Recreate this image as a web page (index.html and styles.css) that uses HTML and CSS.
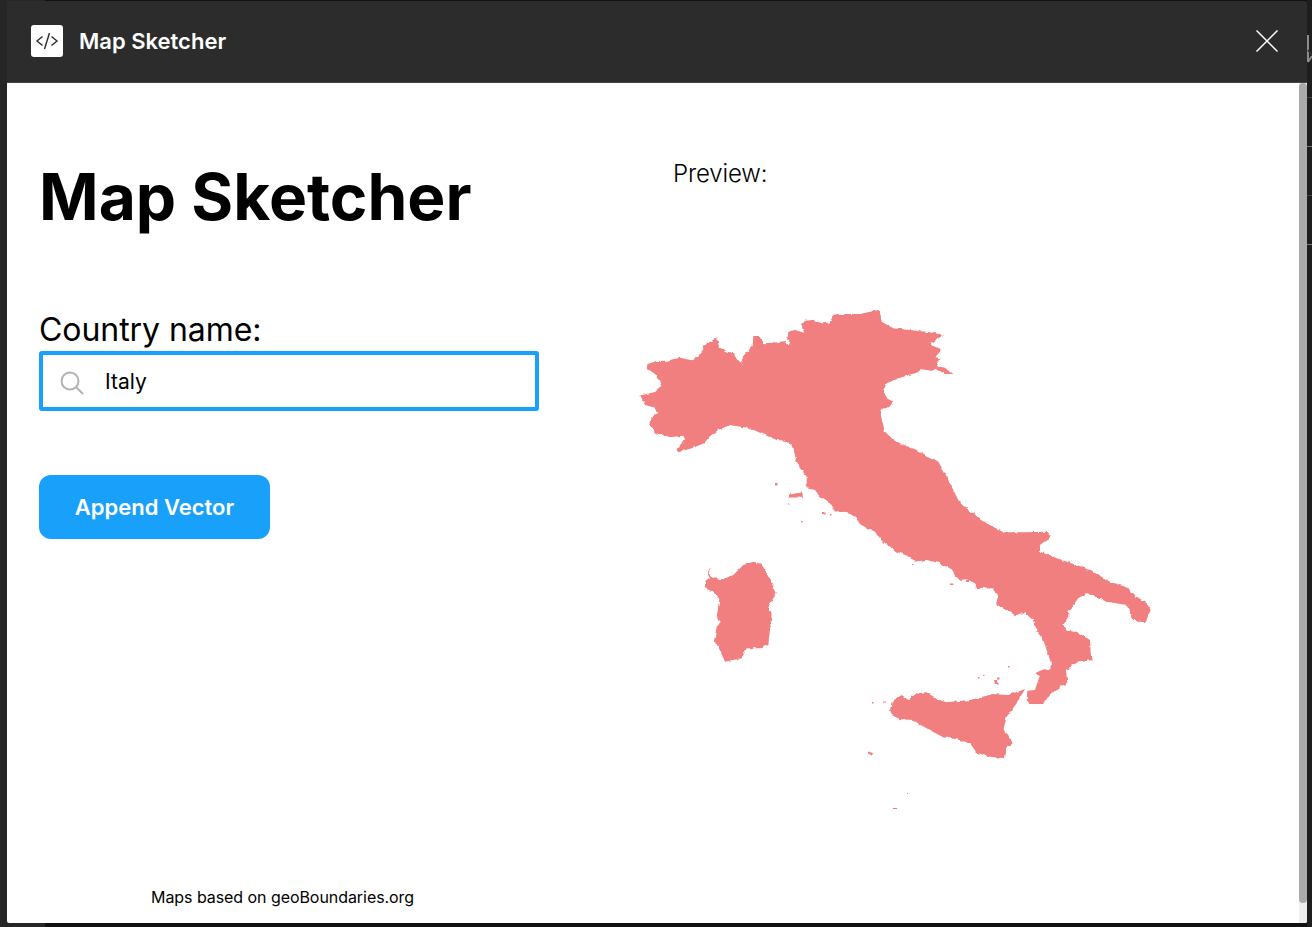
FILE: index.html
```html
<!DOCTYPE html>
<html lang="en">
<head>
<meta charset="utf-8">
<title>Map Sketcher</title>
<link rel="stylesheet" href="styles.css">
</head>
<body>
<div class="backdrop">
  <div class="window">
    <header class="titlebar">
      <div class="brand">
        <span class="logo">
          <svg width="24" height="18" viewBox="0 0 24 18" fill="none" stroke="#2c2c2c" stroke-width="1.400"><path d="M7.500 4.500 2 9 7.500 13.500M16.500 4.500 22 9 16.500 13.500M14.500 1 9.500 17"/></svg>
        </span>
        <span class="brand-name">Map Sketcher</span>
      </div>
      <svg class="close" width="22" height="22" viewBox="0 0 22 22" fill="none" stroke="#fff" stroke-width="1.500"><path d="M.5.500 21.500 21.500M21.500.500.500 21.500"/></svg>
    </header>
    <div class="content">
      <main class="page">
        <section class="form">
          <h1 class="title">Map Sketcher</h1>
          <label class="field-label" for="country">Country name:</label>
          <div class="search">
            <svg class="search-icon" width="24" height="24" viewBox="0 0 24 24" fill="none" stroke="#b3b3b3" stroke-width="2"><circle cx="10" cy="10" r="8.500"/><path d="M16 16l7 7"/></svg>
            <input id="country" class="search-input" value="Italy">
          </div>
          <button class="append">Append Vector</button>
          <p class="credit">Maps based on geoBoundaries.org</p>
        </section>
        <section class="preview">
          <p class="preview-label">Preview:</p>
          <svg class="map" width="530" height="520" viewBox="630 300 530 520" fill="#f27f7f">
            <defs>
              <filter id="rough" x="-2%" y="-2%" width="104%" height="104%">
                <feTurbulence type="fractalNoise" baseFrequency="0.22" numOctaves="2" seed="4"/>
                <feDisplacementMap in="SourceGraphic" scale="3.500" xChannelSelector="R" yChannelSelector="G"/>
              </filter>
            </defs>
            <g filter="url(#rough)">
            <path d="M639.300 395.700 646.700 394 655 392 662.300 386 659.300 380 655 374 646.700 368.300 647.700 364 656.700 361 666.700 360.700 680 357.700 691.700 360.300 698.300 356 703.300 349.300 702.700 346 711.700 340.700 717.300 337.300 718.300 345 725 351 734.300 353.300 736.700 359.300 742.700 364 741.700 358.300 746.700 351.700 752.700 346 753.300 336 759.300 336 763.300 343.300 773.300 342.700 785 341 789.300 346 791 342.700 786.700 337.700 787.300 331.700 795 330 804 332.700 801.700 325 805 320.700 813.300 320 821.700 323.300 829.300 322.700 833.300 315.700 846.700 314 860 314 878.300 310 880 313.300 881.700 321.700 893.300 328.300 916.700 330.700 930 332.300 944 335 938.300 338.300 930 344.300 941.700 350 935 357.300 940.700 358.300 936.700 366 945 367.700 952.300 374 945 374 936.700 369 931.700 370.700 921.700 369.300 916.700 372.700 901.700 377.300 886.700 383.300 883.300 390 886.700 398.300 893.300 401.700 888.300 408.300 881.700 408.300 880.700 415 885 431.700 893.300 440 901.700 444 916.700 450 926.700 456.700 938.300 461.700 945 473.300 953.300 490 960 503.300 973.300 513.300 986.700 523.300 1003.300 532.300 1026.700 532.300 1046.700 531.700 1050.700 536.700 1040 545 1040 551.700 1060 559.300 1090 570 1110 581.700 1128.300 587.700 1131.700 593.300 1146.700 603.300 1150.700 610 1145 623.300 1131.700 618.300 1126.700 605 1106.700 601.700 1095 596.700 1086.700 593.300 1078.300 598.300 1068.300 611.700 1068.300 616.700 1063.300 625 1066.700 630.700 1076.700 631.700 1090 640 1090.700 653.300 1092.700 660 1076.700 662.700 1066 670 1067.300 682.700 1056.700 689.300 1048.300 696.700 1043.300 704 1030 704 1026.700 700 1027.300 690.700 1035 690 1039.300 676.700 1035 673.300 1041.700 670 1051.700 668.300 1050 660 1043.300 640 1038.300 633.300 1032.700 620 1025 612.700 1015 615 1000 606.700 996 604 998.300 596.700 991.700 587.300 976.700 588.300 975 583.300 966.700 579.300 958.300 580 950 568.300 938.300 562.700 926.700 560 915 561.700 910 556.700 896.700 551.700 880 539.300 875 531.700 863.300 526 860 524 855 516.700 843.300 510.700 835 511.700 831.700 505 820 496.700 815 490 806.700 488.300 806.700 476.700 800 468.300 796 460 793.300 446.700 785 440.700 776.700 440 763.300 434.300 750 428.300 730 425 718.300 430 710 436 704 443.300 693.300 447.700 678.300 452.300 676.700 449 685 439.300 683.300 435.700 670 437.300 655 432.700 649.300 423.300 653.300 415 658.300 413.300 655 407.700 645 405 640 396.700Z"/>
            <path d="M705 581.700 710 578.300 706.700 572.700 711.700 567.300 708.300 573.300 713.300 578.300 723.300 579.300 733.300 575 743.300 565 753.300 561.700 761.700 564 768.300 576.700 776.700 592.700 768.300 606.700 771.700 613.300 768.300 645 761.700 648.300 746.700 648.300 741.700 658.300 725 661.700 718.300 646.700 714 641.700 716.700 626.700 720.700 621.700 716.700 616.700 719.300 600 713.300 591.700 705 588.300Z"/>
            <path d="M890 710 891.700 701.700 901.700 695 908.300 700 916.700 693.300 926.700 692.300 938.300 700 946.700 702.300 970 700 993.300 694 1008.300 695 1025 689 1016.700 703.300 1006.700 716.700 1003.300 730 1008.300 735 1012.700 743.300 1006.700 748.300 1005 758.300 990 756.700 976.700 752.700 970 743.300 956.700 739.300 943.300 737.300 923.300 726.700 913.300 720 900 719.300 891.700 715Z"/>
            <path d="M789 494.500 802 492.500 803 498 797 497.500 789 497.500Z"/>
            </g>
            <path d="M775 483h2.500v2.500h-2.500zM868 751.500 873 753 872 755.500 868 753.500ZM950 583.500h3.500v1.500h-3.500zM966 580h3v2h-3zM997 677.500h2.500v2h-2.500zM994 680h3v4h-2zM997 682l2 2-1 1-1-1zM823.500 512.500h2v2h-2zM788 503.500h1.500v1h-1.500zM801 521h1.500v1.500h-1.500zM822 512h2v2h-2zM830 514h1.500v1.500h-1.500zM978 677h1.500v1.500h-1.500zM1008 666h1.500v1.500h-1.500zM983 675h1.500v1h-1.500zM872 702h1.500v1.500h-1.500zM883 701.500h3v1h-3zM893 808h4v1h-4zM907 793h1v1h-1zM912 564h1.500v1h-1.500z"/>
          </svg>
        </section>
      </main>
      <div class="scrollbar"><div class="thumb"></div></div>
    </div>
  </div>
  <aside class="side">
    <svg class="side-glyph" width="5" height="28" viewBox="0 0 5 28" fill="none" stroke="#8c8c8c" stroke-width="2"><path d="M1 0V27M1 27 5 21"/><path d="M1 15 5 20" stroke="#333"/></svg>
    <i class="tick tick-dim"></i><i class="tick tick-light"></i><i class="tick tick-dim"></i><i class="tick tick-light"></i>
  </aside>
</div>
</body>
</html>
```
FILE: styles.css
```css
* { box-sizing: border-box; }
html, body { margin: 0; height: 100%; overflow: hidden; }
body { background: #1a1a1a; font-family: Inter, "Liberation Sans", sans-serif; color: #000; }
.backdrop { display: flex; height: 927px; padding: 1px 0 4px 7px; background: linear-gradient(to right, #262626 45px, #111 45px); }
.window { width: 1300px; height: 922px; display: flex; flex-direction: column; border-radius: 2px; overflow: hidden; }
.titlebar { height: 82px; flex: none; display: flex; align-items: center; justify-content: space-between; padding: 0 29px 1px 24px; background: #2c2c2c; border-bottom: 1px solid #444; }
.brand { display: flex; align-items: center; gap: 16px; }
.logo { width: 32px; height: 32px; border-radius: 3px; background: #fff; display: flex; align-items: center; justify-content: center; }
.brand-name { color: #fff; font-size: 22px; font-weight: 600; }
.content { flex: 1; display: flex; background: #fff; min-height: 0; }
.page { flex: 1; display: flex; min-width: 0; }
.form { width: 592px; padding: 0 0 0 32px; display: flex; flex-direction: column; align-items: flex-start; }
.title { margin: 74px 0 0; font-size: 64px; line-height: 80px; font-weight: 700; }
.field-label { margin-top: 73px; font-size: 32px; line-height: 39px; letter-spacing: -0.05px; }
.search { width: 500px; height: 60px; margin-top: 2px; border: 4px solid #18a0fb; border-radius: 3px; display: flex; align-items: center; padding-left: 17px; gap: 21px; }
.search-icon { flex: none; margin-top: 4px; }
.search-input { border: 0; outline: 0; padding: 0; font: 400 21px Inter, sans-serif; color: #000; flex: 1; min-width: 0; }
.append { margin-top: 64px; width: 231px; height: 64px; border: 0; border-radius: 12px; background: #18a0fb; color: #fff; font: 600 22px Inter, sans-serif; padding: 0; }
.credit { margin: 348px 0 0 112px; font-size: 16px; line-height: 20px; letter-spacing: -0.06px; }
.preview { flex: 1; min-width: 0; display: flex; flex-direction: column; }
.preview-label { margin: 76px 0 0 74px; font-size: 24px; line-height: 29px; letter-spacing: -0.15px; font-weight: 300; }
.map { display: block; margin: 112px 0 0 31px; }
.scrollbar { width: 8px; flex: none; background: #eee; }
.thumb { height: 820px; background: #aaa; border-radius: 4px; }
.side { flex: 1; display: flex; flex-direction: column; background: #1e1e1e; padding-top: 35px; margin: -1px 0 -4px; }
.side-glyph { display: block; flex: none; margin-bottom: 34px; }
.tick { display: block; height: 1px; margin-bottom: 48px; }
.tick-dim { background: #444; }
.tick-light { background: #777; }
```
